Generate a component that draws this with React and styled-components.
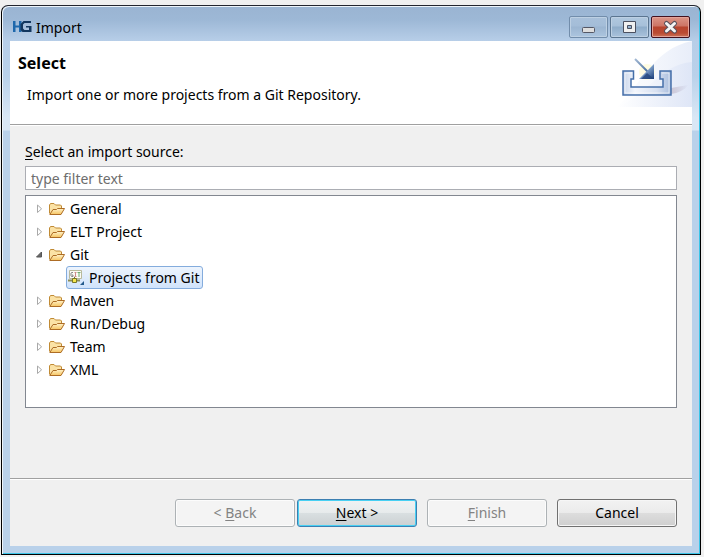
import React, { useState } from "react";
import styled, { createGlobalStyle, css } from "styled-components";

const GlobalStyle = createGlobalStyle`
  * { box-sizing: border-box; }
  body {
    margin: 0;
    background: #f0f0f0;
    color: #000;
    font-family: "Noto Sans", "Open Sans", sans-serif;
    font-size: 14px;
    line-height: 20px;
  }
  button, input { font: inherit; color: inherit; }
`;

const Desktop = styled.div`
  display: flex;
  min-height: 100vh;
  padding: 5px 3px 2px 1px;
`;

const Dialog = styled.main`
  flex: 1;
  display: flex;
  flex-direction: column;
  padding: 0 8px 8px;
  border: 1px solid #000;
  border-top-color: #23252e;
  border-radius: 7px 7px 0 0;
  background: linear-gradient(#9ab4d2 0, #9db8d6 14px, #b7cee8 35px, #b9d1ea 70px, #d9e7f5 112px, #d9e7f5 124px, #b9d1ea 125px);
  box-shadow: inset 1px 1px 0 #eef5fb, inset -1px -1px 0 #3bc5e8;
`;

const TitleBar = styled.header`
  display: flex;
  align-items: flex-start;
  height: 35px;
  padding: 10px 2px 0 3px;
`;

const Title = styled.h1`
  flex: 1;
  margin: 1px 0 0 4px;
  font-size: 14px;
  font-weight: 400;
  line-height: 22px;
`;

const Logo = styled.svg`
  width: 19px;
  height: 12px;
  margin-top: 5px;
`;

const Controls = styled.div`
  display: flex;
  gap: 2px;
`;

const ControlButton = styled.button`
  display: grid;
  place-items: center;
  width: 39px;
  height: 22px;
  padding: 0;
  border: 1px solid ${(p) => (p.$kind === "close" ? "#43111e" : p.$kind === "max" ? "#5b7590" : "#728dab")};
  border-radius: 2px;
  box-shadow: inset 0 0 0 1px ${(p) => (p.$kind === "close" ? "#e3a399" : "#bdd0e3")};
  background: ${(p) =>
    p.$kind === "close"
      ? "linear-gradient(#dc9587 0, #cd7465 45%, #b8442e 50%, #bb4b33 80%, #cb7459 100%)"
      : p.$kind === "max"
        ? "linear-gradient(#b0c8df 0, #a7c0d9 45%, #8eacc9 50%, #a9c2dc 100%)"
        : "linear-gradient(#a8c0da 0, #a4bdd8 45%, #9bb5d1 50%, #acc5df 100%)"};
`;

const Client = styled.div`
  flex: 1;
  display: flex;
  flex-direction: column;
  background: #f0f0f0;
`;

const Banner = styled.section`
  display: flex;
  justify-content: space-between;
  height: 84px;
  border-bottom: 1px solid #a0a0a0;
  background: #fff;
`;

const BannerText = styled.div`
  padding: 12px 0 0 8px;
`;

const Heading = styled.h2`
  margin: 0;
  font-size: 16px;
  font-weight: 700;
  line-height: 20px;
`;

const Description = styled.p`
  margin: 12px 0 0 9px;
`;

const BannerArt = styled.svg`
  flex: none;
  width: 75px;
  height: 66px;
`;

const Content = styled.section`
  flex: 1;
  display: flex;
  flex-direction: column;
  padding: 16px 15px 70px;
  border-top: 1px solid #fff;
  border-bottom: 1px solid #a0a0a0;
`;

const FilterInput = styled.input`
  width: 100%;
  height: 24px;
  margin: 4px 0 5px;
  padding: 0 5px;
  border: 1px solid #abadb3;
  border-radius: 0;
  background: #fff;
  outline: none;
  &::placeholder { color: #6d6d6d; opacity: 1; }
`;

const Tree = styled.ul`
  flex: 1;
  margin: 0;
  padding: 1px 9px;
  border: 1px solid #828790;
  background: #fff;
  list-style: none;
`;

const Group = styled.ul`
  margin: 0;
  padding: 0 0 0 31px;
  list-style: none;
`;

const rowLayout = css`
  display: flex;
  align-items: center;
  height: 23px;
  border: 0;
  background: none;
  text-align: left;
`;

const FolderRow = styled.button`
  ${rowLayout}
  gap: 5px;
  padding: 0;
`;

const ProjectRow = styled.button`
  ${rowLayout}
  gap: 5px;
  padding: 0 3px 0 1px;
  border: 1px solid #84acdd;
  border-radius: 3px;
  background: linear-gradient(#edf4fd, #d0e3fb);
`;

const Arrow = styled.svg`
  width: 9px;
  height: 11px;
`;

const Icon = styled.svg`
  width: 16px;
  height: 16px;
`;

const Footer = styled.footer`
  display: flex;
  justify-content: flex-end;
  gap: 10px;
  padding: 19px 15px;
  border-top: 1px solid #fff;
`;

const Pair = styled.div`
  display: flex;
  gap: 2px;
`;

const PushButton = styled.button`
  width: 120px;
  height: 28px;
  padding: 0;
  border: 1px solid #707070;
  border-radius: 3px;
  background: linear-gradient(#f2f2f2 0, #ebebeb 48%, #dddddd 50%, #cfcfcf 100%);
  box-shadow: inset 0 0 0 1px #f6f6f6;
  ${(p) => p.$primary && css`
    border-color: #3c7fb1;
    background: linear-gradient(#f0f2f3 0, #e7ebec 48%, #d9dfe1 50%, #cbd0d2 100%);
    box-shadow: inset 0 0 0 1px #48d0f3;
  `}
  &:disabled {
    border-color: #adb2b5;
    background: #f4f4f4;
    box-shadow: inset 0 0 0 1px #fcfcfc;
    color: #838383;
  }
`;

const Key = styled.span`
  text-decoration: underline;
  text-underline-offset: 2px;
`;

function ExpandArrow({ open }) {
  return (
    <Arrow viewBox="0 0 9 11" aria-hidden="true">
      {open ? (
        <path d="M6.5 3v5h-5z" fill="#686868" stroke="#555" />
      ) : (
        <path d="M2.5 2v7.5L6.6 5.8z" fill="#fff" stroke="#a9a9a9" />
      )}
    </Arrow>
  );
}

function FolderIcon() {
  return (
    <Icon viewBox="0 0 16 16" aria-hidden="true">
      <defs>
        <linearGradient id="folderFront" x1="0" y1="0" x2="0" y2="1">
          <stop offset="0" stopColor="#fff3cc" />
          <stop offset="1" stopColor="#f6c460" />
        </linearGradient>
      </defs>
      <path d="M.5 12.5V4l1-1.5H5L6.5 4h5l1 1v3" fill="#fbe2a5" stroke="#c08a34" strokeLinejoin="round" />
      <path d="M.8 13.5 4 8.5h3.5l1-1h7L12 13.5z" fill="url(#folderFront)" stroke="#ad6c25" strokeLinejoin="round" />
    </Icon>
  );
}

function GitIcon() {
  return (
    <Icon viewBox="0 0 16 16" aria-hidden="true">
      <path d="M1.5 .5h12v8h-12z" fill="#fbfbf5" stroke="#b9b99c" />
      <path d="M5 2.5H3.5l-.5.5v3l.5.5H5V5H4" fill="none" stroke="#858585" />
      <path d="M6.5 2.5h2M7.5 2.5v4M6.5 6.5h2" fill="none" stroke="#cf8b8b" />
      <path d="M9.5 2.5h3M11 3v4" fill="none" stroke="#6cac70" />
      <path d="M0 10.5h12" stroke="#8d8d52" strokeWidth="2" />
      <path d="M6.5 7v2" stroke="#71712e" />
      <path d="M4.5 8.5h4v4h-4z" fill="#f4e64c" stroke="#77772b" />
      <path d="M16 11v4h-4z" fill="#245b8c" />
    </Icon>
  );
}

function HgLogo() {
  return (
    <Logo viewBox="0 0 19 12" aria-hidden="true">
      <path d="M0 0h2.5v4.5H6V0h2.5v11H6V6.5H2.5V11H0z" fill="#1e68ac" />
      <path d="M10.5 0H18v2h-6.5L10 3.5v4L11.5 9H16V6.5h-3V5h5.5v6H9.5L7.5 9V3z" fill="#12375f" />
    </Logo>
  );
}

function ImportArt() {
  return (
    <BannerArt viewBox="0 0 75 66" aria-hidden="true">
      <defs>
        <linearGradient id="artWash" x1="0" y1="0" x2="1" y2="0">
          <stop offset="0" stopColor="#fff" />
          <stop offset="1" stopColor="#dce4f6" />
        </linearGradient>
        <linearGradient id="artTray" x1="0" y1="0" x2="1" y2="0">
          <stop offset="0" stopColor="#c7d4ea" />
          <stop offset=".25" stopColor="#f3f6fc" />
          <stop offset=".7" stopColor="#d7e0f1" />
          <stop offset="1" stopColor="#a9bddd" />
        </linearGradient>
        <linearGradient id="artArrow" x1="0" y1="0" x2="1" y2="1">
          <stop offset="0" stopColor="#c3d3e8" />
          <stop offset=".5" stopColor="#7c9dc6" />
          <stop offset="1" stopColor="#183b78" />
        </linearGradient>
        <linearGradient id="artLine" gradientUnits="userSpaceOnUse" x1="18" y1="18" x2="32" y2="32">
          <stop offset="0" stopColor="#a3b9d4" />
          <stop offset="1" stopColor="#3f6699" />
        </linearGradient>
        <linearGradient id="artShadow" x1="0" y1="0" x2="1" y2="0">
          <stop offset="0" stopColor="#b9adbf" />
          <stop offset="1" stopColor="#dce4f6" />
        </linearGradient>
      </defs>
      <path d="M75 0v66H0C25 43 36 8 75 0z" fill="url(#artWash)" opacity=".65" />
      <path d="M75 21v45H0C31 54 42 24 75 21z" fill="url(#artWash)" opacity=".8" />
      <circle cx="30" cy="31" r="8" fill="#fffce1" />
      <path d="M54 47 71 44c-3 5-10 8-17 9z" fill="url(#artShadow)" opacity=".6" />
      <path d="M6 30h10.500v8H14v8h32v-8h-3v-8h11v24H6z" fill="url(#artTray)" stroke="#456fa9" strokeWidth="1.500" />
      <path d="M15 32H8v20h44V32h-7" fill="none" stroke="#fff" opacity=".6" />
      <path d="m18 18 14 14" stroke="url(#artLine)" strokeWidth="2" />
      <path d="M37 23v15H22z" fill="url(#artArrow)" />
      <path d="m24 38 6-6 7 6z" fill="#24467d" opacity=".8" />
    </BannerArt>
  );
}

function MinimizeIcon() {
  return (
    <svg width="37" height="20" viewBox="0 0 37 20" aria-hidden="true">
      <rect x="12.5" y="10.5" width="12" height="5" rx="1" fill="#ddd" stroke="#545765" />
    </svg>
  );
}

function MaximizeIcon() {
  return (
    <svg width="37" height="20" viewBox="0 0 37 20" aria-hidden="true">
      <path d="M12.5 4.5h12v11h-12zM16.500 8.500v3h4v-3z" fill="#f0f0f0" fillRule="evenodd" stroke="#4b5060" strokeLinejoin="round" />
    </svg>
  );
}

function CloseIcon() {
  return (
    <svg width="37" height="20" viewBox="0 0 37 20" aria-hidden="true">
      <path d="M14.500 6.500 22.500 14M22.500 6.500 14.500 14" stroke="#57505c" strokeWidth="5" strokeLinecap="round" />
      <path d="M14.500 6.500 22.500 14M22.500 6.500 14.500 14" stroke="#f4f4f4" strokeWidth="3" strokeLinecap="round" />
    </svg>
  );
}

const folders = ["General", "ELT Project", "Git", "Maven", "Run/Debug", "Team", "XML"];

export default function App() {
  const [gitOpen, setGitOpen] = useState(true);
  return (
    <>
      <GlobalStyle />
      <Desktop>
        <Dialog>
          <TitleBar>
            <HgLogo />
            <Title>Import</Title>
            <Controls>
              <ControlButton aria-label="Minimize"><MinimizeIcon /></ControlButton>
              <ControlButton $kind="max" aria-label="Maximize"><MaximizeIcon /></ControlButton>
              <ControlButton $kind="close" aria-label="Close"><CloseIcon /></ControlButton>
            </Controls>
          </TitleBar>
          <Client>
            <Banner>
              <BannerText>
                <Heading>Select</Heading>
                <Description>Import one or more projects from a Git Repository.</Description>
              </BannerText>
              <ImportArt />
            </Banner>
            <Content>
              <label htmlFor="source-filter"><Key>S</Key>elect an import source:</label>
              <FilterInput id="source-filter" type="text" placeholder="type filter text" />
              <Tree>
                {folders.map((name) => {
                  const isGit = name === "Git";
                  const open = isGit && gitOpen;
                  return (
                    <li key={name}>
                      <FolderRow aria-expanded={open} onClick={() => isGit && setGitOpen(!gitOpen)}>
                        <ExpandArrow open={open} />
                        <FolderIcon />
                        {name}
                      </FolderRow>
                      {open && (
                        <Group>
                          <li><ProjectRow><GitIcon />Projects from Git</ProjectRow></li>
                        </Group>
                      )}
                    </li>
                  );
                })}
              </Tree>
            </Content>
            <Footer>
              <Pair>
                <PushButton disabled>&lt; <Key>B</Key>ack</PushButton>
                <PushButton $primary><Key>N</Key>ext &gt;</PushButton>
              </Pair>
              <PushButton disabled><Key>F</Key>inish</PushButton>
              <PushButton>Cancel</PushButton>
            </Footer>
          </Client>
        </Dialog>
      </Desktop>
    </>
  );
}
